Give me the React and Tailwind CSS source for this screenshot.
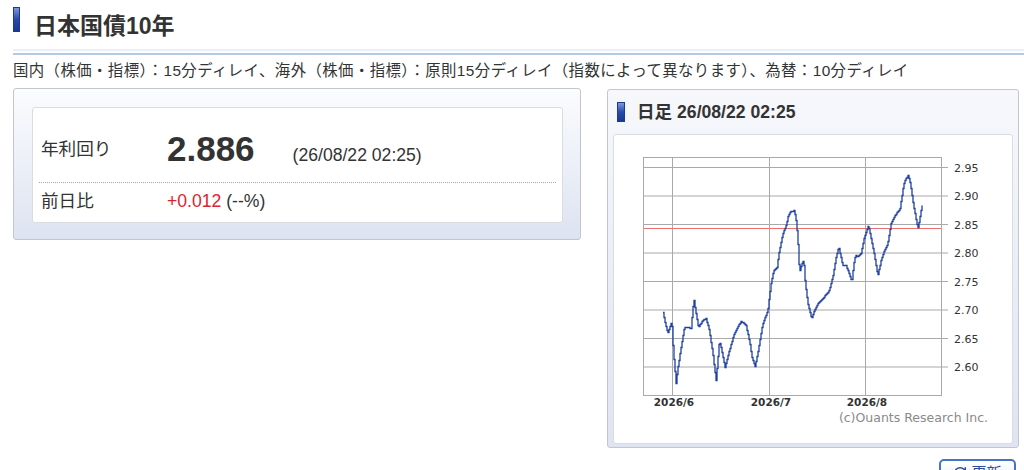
import React from "react";
import { RotateCw } from "lucide-react";

// Intraday yield series, in chart pixel coordinates (x, y)
const SERIES = [
  [661.7, 311], [664, 322], [666.7, 333], [668.5, 327], [670.7, 320.7], [672.3, 350],
  [675, 383.3], [676.7, 368], [680, 346.7], [683.3, 326.7], [686.7, 326.7], [690, 328],
  [692.7, 298.3], [695, 313], [697.3, 326.7], [701.7, 320], [705, 318.3], [708.3, 330],
  [711.7, 353], [715, 380], [718.3, 340], [720.7, 350], [724, 366.7], [728.3, 350],
  [733.3, 333], [740, 320.7], [745, 325], [748.3, 340], [751, 356.7], [754, 366],
  [756.7, 353], [761.7, 323.3], [766.7, 310], [770, 283.3], [772.7, 270], [776, 266.7],
  [778.3, 250], [781.7, 233.3], [785, 225], [787, 216], [789.3, 211.7], [793.3, 210],
  [795, 220], [796.7, 236.7], [797.7, 260], [798.7, 271.7], [800.7, 263.3], [802.7, 260],
  [804, 280], [806.7, 303.3], [810.7, 318.3], [813.3, 310], [816.7, 303.3], [821.7, 298.3],
  [828.3, 290], [831.7, 276.7], [835, 256.7], [837.7, 246.7], [841.7, 265], [845, 265],
  [848.3, 273.3], [850.7, 281.7], [852.7, 263.3], [854.3, 255], [857.3, 256], [860, 253.3],
  [863.3, 236.7], [867.3, 225], [870, 238.3], [873.3, 255], [876.7, 275], [880, 260],
  [883.3, 250], [886.7, 243.3], [890, 223.3], [893.3, 216.7], [896, 211.7], [898.7, 210],
  [900.7, 196.7], [902.7, 183.3], [905, 178.3], [907.3, 175], [909.3, 183.3], [911.7, 200],
  [914, 213.3], [916.7, 228.3], [918.3, 220], [920, 210], [921.3, 203.3],
];

// Step path sampled once per pixel column, like a tick chart
function stepPath(points) {
  const x0 = Math.ceil(points[0][0]);
  const x1 = Math.floor(points[points.length - 1][0]);
  let j = 0;
  let d = "";
  for (let x = x0; x <= x1; x++) {
    while (j < points.length - 2 && points[j + 1][0] < x) j++;
    const [ax, ay] = points[j];
    const [bx, by] = points[j + 1];
    const t = bx === ax ? 0 : (x - ax) / (bx - ax);
    const y = Math.round(ay + (by - ay) * Math.min(Math.max(t, 0), 1)) + 0.5;
    d += x === x0 ? `M${x} ${y}` : `H${x}V${y}`;
  }
  return d;
}

const Y_TICKS = ["2.95", "2.90", "2.85", "2.80", "2.75", "2.70", "2.65", "2.60"];
const X_TICKS = [
  [671.5, "2026/6"],
  [768.5, "2026/7"],
  [864.5, "2026/8"],
];

function Marker({ className }) {
  return (
    <span
      className={`inline-block bg-gradient-to-b from-[#7d97dd] via-[#2a4aa8] to-[#183896] border border-[#1b3a98] ${className}`}
    />
  );
}

function YieldChart() {
  const gridY = (i) => 167.5 + i * 28.5;
  return (
    <svg width="400" height="308" className="block">
      <g transform="translate(-613,-135)">
        {/* plot frame and grid */}
        <rect x="642.5" y="157.5" width="298" height="238" fill="none" stroke="#a9a9a9" />
        {Y_TICKS.map((t, i) => (
          <g key={t}>
            <line x1="643" x2="947" y1={gridY(i)} y2={gridY(i)} stroke="#a9a9a9" />
            <text
              x="953"
              y={gridY(i) + 4}
              fontSize="11"
              fill="#333"
              fontFamily="'DejaVu Sans', sans-serif"
            >
              {t}
            </text>
          </g>
        ))}
        {X_TICKS.map(([x, label]) => (
          <g key={label}>
            <line x1={x} x2={x} y1="158" y2="395" stroke="#a9a9a9" />
            <text
              x={x + 1.5}
              y="406"
              fontSize="10.5"
              fontWeight="bold"
              fill="#333"
              textAnchor="middle"
              fontFamily="'DejaVu Sans', sans-serif"
            >
              {label}
            </text>
          </g>
        ))}
        {/* previous close */}
        <line x1="643" x2="940" y1="228.5" y2="228.5" stroke="#ee6f6f" />
        {/* price line */}
        <path d={stepPath(SERIES)} fill="none" stroke="#1f3f9f" strokeWidth="1.3" />
        <text
          x="987"
          y="422"
          fontSize="12.5"
          fill="#8a8a8a"
          textAnchor="end"
          fontFamily="'DejaVu Sans', sans-serif"
        >
          (c)Ouants Research Inc.
        </text>
      </g>
    </svg>
  );
}

export default function App() {
  return (
    <div
      className="w-[1024px] h-[470px] overflow-hidden bg-white text-[#333]"
      style={{ fontFamily: "'Liberation Sans', 'Noto Sans CJK JP', sans-serif" }}
    >
      {/* page title */}
      <div className="flex items-start pl-[13px] pt-[7px] h-[49px]">
        <Marker className="w-[7px] h-[25px]" />
        <h1 className="ml-[14px] mt-[8px] text-[23px] leading-[23px] font-bold text-[#333]">
          日本国債10年
        </h1>
      </div>
      <div className="ml-[13px] h-[2px] bg-[#eaf0f8]" />
      <div className="ml-[13px] mt-[2px] h-[2px] bg-[#b4c8e8]" />

      {/* delay notice */}
      <p className="pl-[13px] mt-[6px] text-[15.4px] leading-[20px] tracking-[0.42px] whitespace-nowrap">
        国内（株価・指標）：15分ディレイ、海外（株価・指標）：原則15分ディレイ（指数によって異なります）、為替：10分ディレイ
      </p>

      <div className="flex items-start pl-[13px] gap-[26px] mt-[7px]">
        {/* quote panel */}
        <div className="w-[568px] h-[152px] rounded-[3px] border border-[#c3c6cc] bg-gradient-to-b from-[#fbfcfe] to-[#dde3f1] pt-[18px] pl-[18px] pr-[17px]">
          <div className="h-[116px] rounded-[3px] border border-[#d9dce1] bg-white px-[6px] pt-[21px]">
            <div className="flex items-center h-[54px] pb-[12px] border-b border-dotted border-[#a8a8a8]">
              <span className="w-[128px] pl-[2px] text-[17.6px]">年利回り</span>
              <div className="flex items-baseline">
                <span className="text-[35px] leading-[35px] font-bold text-[#333]">2.886</span>
                <span className="ml-[38px] text-[17.6px]">(26/08/22 02:25)</span>
              </div>
            </div>
            <div className="flex items-center h-[36px]">
              <span className="w-[128px] pl-[2px] text-[17.6px]">前日比</span>
              <span className="text-[17.6px]">
                <span className="text-[#dc2430]">+0.012</span> (--%)
              </span>
            </div>
          </div>
        </div>

        {/* chart panel */}
        <div className="flex flex-col items-end">
          <div className="w-[412px] mt-[1px] rounded-[3px] border border-[#c3c6cc] bg-gradient-to-b from-[#f7f8fc] to-[#dfe4f1] px-[5px] pb-[3px]">
            <div className="flex items-center h-[44px] pl-[4px]">
              <Marker className="w-[8px] h-[20px]" />
              <span className="ml-[12px] text-[17.6px] font-bold">日足 26/08/22 02:25</span>
            </div>
            <div className="h-[310px] rounded-[3px] border border-[#d9dce1] bg-white">
              <YieldChart />
            </div>
          </div>
          <button className="mt-[11px] mr-[3px] w-[77px] h-[28px] flex items-center justify-center gap-[4px] rounded-[5px] border-2 border-[#4a72c4] bg-gradient-to-b from-white to-[#e6ecf7] text-[15px] text-[#2a4a9a]">
            <RotateCw size={14} strokeWidth={2.5} />
            更新
          </button>
        </div>
      </div>
    </div>
  );
}
